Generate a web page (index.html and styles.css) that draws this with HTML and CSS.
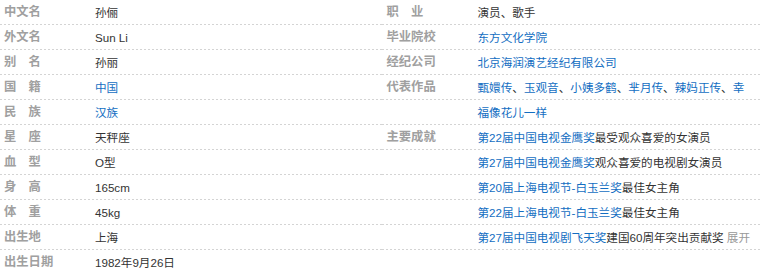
FILE: index.html
```html
<!DOCTYPE html>
<html lang="zh-CN">
<head>
<meta charset="utf-8">
<title>孙俪 基本信息</title>
<link rel="stylesheet" href="styles.css">
</head>
<body>
<div class="basic-info">
  <dl class="block block-left">
    <div class="item"><dt class="name">中文名</dt><dd class="value">孙俪</dd></div>
    <div class="item"><dt class="name">外文名</dt><dd class="value">Sun Li</dd></div>
    <div class="item"><dt class="name">别　名</dt><dd class="value">孙丽</dd></div>
    <div class="item"><dt class="name">国　籍</dt><dd class="value"><a href="#">中国</a></dd></div>
    <div class="item"><dt class="name">民　族</dt><dd class="value"><a href="#">汉族</a></dd></div>
    <div class="item"><dt class="name">星　座</dt><dd class="value">天秤座</dd></div>
    <div class="item"><dt class="name">血　型</dt><dd class="value">O型</dd></div>
    <div class="item"><dt class="name">身　高</dt><dd class="value">165cm</dd></div>
    <div class="item"><dt class="name">体　重</dt><dd class="value">45kg</dd></div>
    <div class="item"><dt class="name">出生地</dt><dd class="value">上海</dd></div>
    <div class="item"><dt class="name">出生日期</dt><dd class="value">1982年9月26日</dd></div>
  </dl>
  <dl class="block block-right">
    <div class="item"><dt class="name">职　业</dt><dd class="value">演员、歌手</dd></div>
    <div class="item"><dt class="name">毕业院校</dt><dd class="value"><a href="#">东方文化学院</a></dd></div>
    <div class="item"><dt class="name">经纪公司</dt><dd class="value"><a href="#">北京海润演艺经纪有限公司</a></dd></div>
    <div class="item"><dt class="name">代表作品</dt><dd class="value"><a href="#">甄嬛传</a>、<a href="#">玉观音</a>、<a href="#">小姨多鹤</a>、<a href="#">芈月传</a>、<a href="#">辣妈正传</a>、<a href="#">幸福像花儿一样</a></dd></div>
    <div class="item"><dt class="name">主要成就</dt><dd class="value awards">
      <span class="award"><a href="#">第22届中国电视金鹰奖</a>最受观众喜爱的女演员</span>
      <span class="award"><a href="#">第27届中国电视金鹰奖</a>观众喜爱的电视剧女演员</span>
      <span class="award"><a href="#">第20届上海电视节-白玉兰奖</a>最佳女主角</span>
      <span class="award"><a href="#">第22届上海电视节-白玉兰奖</a>最佳女主角</span>
      <span class="award"><a href="#">第27届中国电视剧飞天奖</a>建国60周年突出贡献奖 <a class="toggle" href="#">展开</a></span>
    </dd></div>
  </dl>
</div>
</body>
</html>
```

FILE: styles.css
```css
html, body {
  margin: 0;
  padding: 0;
  background: #fff;
}

body {
  font-family: "Liberation Sans", "Noto Sans CJK SC", sans-serif;
  color: #333;
}

.basic-info {
  display: flex;
  align-items: flex-start;
  width: 760px;
}

.block {
  margin: 0;
  line-height: 25px;
  background-image:
    linear-gradient(to bottom, #fff 24px, transparent 24px),
    linear-gradient(to right, #d4d4d4 2px, #fff 2px);
  background-size: 4px 25px, 4px 25px;
  background-repeat: repeat, repeat;
}

.block-left {
  width: 383px;
}

.block-right {
  flex: 1;
  padding-right: 10px;
}

.item {
  display: flex;
  align-items: flex-start;
}

.name {
  width: 91px;
  flex: none;
  padding-left: 4px;
  font-size: 12.3px;
  font-weight: bold;
  color: #a0a0a0;
  white-space: nowrap;
}

.value {
  margin: 0;
  flex: 1;
  min-width: 0;
  font-size: 11.6px;
  color: #333;
}

.value a {
  color: #136ec2;
  text-decoration: none;
}

.awards {
  display: flex;
  flex-direction: column;
}

.award {
  white-space: nowrap;
}

.value a.toggle {
  color: #999;
}
```
